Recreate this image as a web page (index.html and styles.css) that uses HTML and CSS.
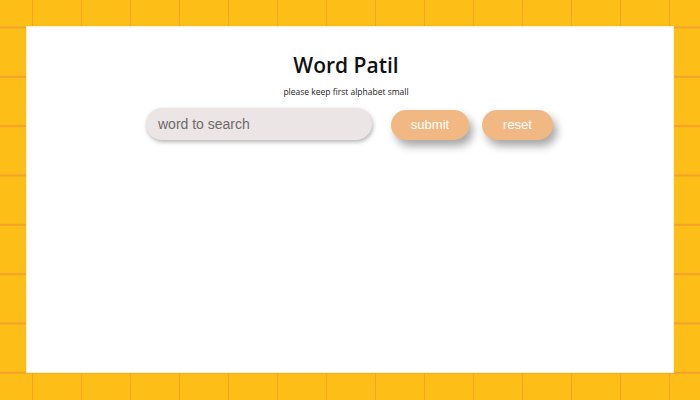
FILE: index.html
```html
<!DOCTYPE html>
<html>
<head>
<meta charset="utf-8">
<link rel="stylesheet" href="styles.css">
</head>
<body>
<main class="card">
  <header class="head">
    <h1 class="title">Word Patil</h1>
    <p class="hint">please keep first alphabet small</p>
  </header>
  <div class="row">
    <input class="search" type="text" placeholder="word to search">
    <button class="btn btn-submit">submit</button>
    <button class="btn btn-reset">reset</button>
  </div>
</main>
</body>
</html>
```

FILE: styles.css
```css
html, body {
  margin: 0;
  height: 100%;
}
body {
  box-sizing: border-box;
  padding: 26px;
  background-color: #fdbe18;
  background-image:
    linear-gradient(to right, #f5a12a 1.5px, transparent 1.5px),
    linear-gradient(to bottom, #f5a12a 1.5px, transparent 1.5px);
  background-size: 49px 49.33px;
  background-position: 32px 26.5px;
}
.card {
  box-sizing: border-box;
  width: 648px;
  height: 347px;
  background: #fff;
  border: 1.5px solid #fdf1cf;
  display: flex;
  flex-direction: column;
  align-items: center;
  padding-top: 23px;
}
.head {
  display: flex;
  flex-direction: column;
  align-items: center;
  padding-right: 8px;
}
.title {
  margin: 0;
  font-family: "Open Sans", sans-serif;
  font-weight: 600;
  font-size: 21px;
  line-height: 30px;
  color: #111;
}
.hint {
  margin: 6px 0 0;
  font-family: "Open Sans", sans-serif;
  font-size: 8.5px;
  line-height: 12px;
  color: #222;
}
.row {
  display: flex;
  align-items: center;
  margin-top: 10px;
  margin-left: -1px;
}
.search {
  box-sizing: border-box;
  width: 226px;
  height: 32px;
  border: none;
  border-radius: 16px;
  background: #ebe5e5;
  padding: 0 12px;
  font-family: "Liberation Sans", Arial, sans-serif;
  font-size: 14px;
  color: #333;
  box-shadow: 1px 2px 4px rgba(0,0,0,0.3);
  outline: none;
}
.search::placeholder {
  color: #6e6a6a;
}
.btn {
  height: 30px;
  border: none;
  border-radius: 15px;
  background: #f2b884;
  color: #fff;
  font-family: "Liberation Sans", Arial, sans-serif;
  font-size: 13px;
  box-shadow: 4px 6px 8px rgba(0,0,0,0.35);
  padding: 0;
  margin-top: 1px;
}
.btn-submit {
  width: 78px;
  margin-left: 19px;
}
.btn-reset {
  width: 71px;
  margin-left: 13px;
}
```
